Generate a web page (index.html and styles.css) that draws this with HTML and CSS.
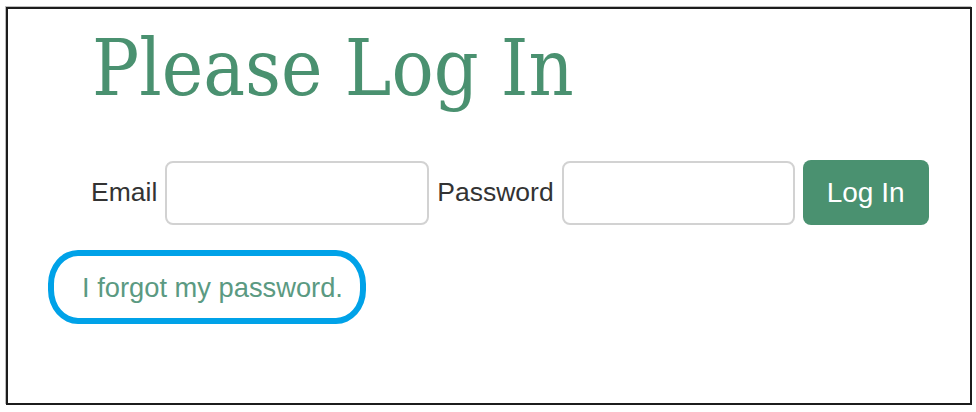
FILE: index.html
```html
<!DOCTYPE html>
<html lang="en">
<head>
  <meta charset="UTF-8">
  <title>Please Log In</title>
  <link rel="stylesheet" href="styles.css">
</head>
<body>
  <div class="frame">
    <h1>Please Log In</h1>
    <form class="login-row">
      <!-- Email -->
      <label for="email">Email</label>
      <input type="email" id="email" name="email" class="field field-email">

      <!-- Password -->
      <label for="password" class="label-password">Password</label>
      <input type="password" id="password" name="password" class="field field-password">

      <button type="submit">Log In</button>
    </form>

    <div class="forgot">
      <a href="#">I forgot my password.</a>
    </div>
  </div>
</body>
</html>
```

FILE: styles.css
```css
body {
  margin: 0;
  padding: 0;
  background: #fff;
  font-family: "Liberation Sans", Arial, sans-serif;
}
.frame {
  box-sizing: border-box;
  width: 966px;
  height: 398px;
  margin: 7px 0 0 6px;
  border: 2px solid #1c1c1c;
  box-shadow: -1px -1px 0 #bdbdbd;
}
h1 {
  margin: 0;
  padding: 20px 0 0 84px;
  font-family: "DejaVu Serif", serif;
  font-stretch: condensed;
  font-weight: normal;
  font-size: 78px;
  line-height: 1;
  color: #4a9170;
}
.login-row {
  display: flex;
  align-items: center;
  margin: 53px 0 0 83px;
}
label {
  font-size: 26.5px;
  color: #333;
}
.field {
  box-sizing: border-box;
  height: 64px;
  margin-left: 8px;
  border: 2px solid #d2d2d2;
  border-radius: 8px;
}
.field-email {
  width: 264px;
}
.label-password {
  margin-left: 8px;
}
.field-password {
  width: 233px;
}
button {
  box-sizing: border-box;
  width: 126px;
  height: 65px;
  margin-left: 8px;
  border: none;
  border-radius: 8px;
  background: #4a9170;
  color: #fff;
  font-family: "Liberation Sans", Arial, sans-serif;
  font-size: 28px;
}
.forgot {
  box-sizing: border-box;
  display: inline-block;
  width: 318px;
  height: 74px;
  margin: 25px 0 0 40px;
  padding: 16px 0 0 28px;
  border: 6px solid #00a2e8;
  border-radius: 30px / 34px;
}
.forgot a {
  font-size: 27.3px;
  color: #5b9a82;
  text-decoration: none;
}
```
